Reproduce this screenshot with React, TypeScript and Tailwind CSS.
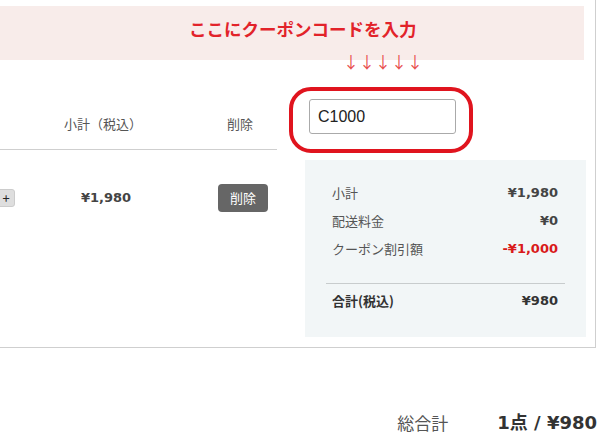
import React from 'react'

const SUMMARY = [
  { label: '小計', value: '¥1,980', red: false },
  { label: '配送料金', value: '¥0', red: false },
  { label: 'クーポン割引額', value: '-¥1,000', red: true },
]

const NUM = { fontFamily: '"DejaVu Sans", "Noto Sans CJK JP", sans-serif' }

export default function App() {
  return (
    <div
      className="w-[600px] h-[435px] bg-white overflow-hidden text-[#555]"
      style={{ fontFamily: '"Noto Sans CJK JP", "Noto Sans", sans-serif' }}
    >
      <div className="w-[596px] h-[348px] border-r border-b border-[#cfcfcf] flex flex-col">
        {/* banner */}
        <div className="mt-[6px] h-[54px] w-[584px] bg-[#f8ecea] flex items-start pl-[189px] pt-[9px]">
          <span className="text-[17.5px] leading-[28px] font-bold text-[#e2232a]">ここにクーポンコードを入力</span>
        </div>

        <div className="flex flex-1">
          {/* cart table */}
          <div className="w-[277px] flex flex-col">
            <div className="h-[90px] border-b border-[#cfcfcf] flex items-end pb-[15px] text-[13px] leading-[20px]">
              <span className="ml-[64px]">小計（税込）</span>
              <span className="ml-[85px]">削除</span>
            </div>
            <div className="flex items-center pt-[34px]">
              <button className="w-[18px] h-[18px] -ml-[3px] rounded-[3px] bg-[#dedede] border border-[#ccc] text-[13px] leading-[14px] text-[#222] flex items-center justify-center">
                +
              </button>
              <span className="ml-[66px] w-[60px] text-[13px] font-bold text-[#444]" style={NUM}>¥1,980</span>
              <button className="ml-[77px] w-[50px] h-[28px] rounded-[4px] bg-[#666] text-white text-[13px] leading-[28px]">
                削除
              </button>
            </div>
          </div>

          {/* coupon + summary */}
          <div className="relative flex-1 flex flex-col">
            <div className="absolute left-[66px] -top-[8px] flex text-[#e8504f] text-[16px] leading-[18px]">
              {[0, 1, 2, 3, 4].map(i => (
                <span key={i} className="w-[16px] text-center">↓</span>
              ))}
            </div>

            <div className="relative ml-[32px] mt-[39px] w-[147px]">
              <input
                readOnly
                value="C1000"
                className="w-[147px] h-[35px] border border-[#aaa] rounded-[3px] px-[8px] text-[16px] text-[#222] outline-none"
                style={{ fontFamily: '"Liberation Sans", Arial, sans-serif' }}
              />
              <div className="absolute -left-[20px] -top-[12px] w-[184px] h-[66px] border-[4px] border-[#e0141e] rounded-[22px]" />
            </div>

            <div className="ml-[28px] mt-[26px] w-[281px] h-[177px] bg-[#f2f6f7] px-[21px] pt-[19px]">
              {SUMMARY.map(r => (
                <div key={r.label} className="h-[28px] flex items-center justify-between pl-[6px] pr-[7px] text-[13px]">
                  <span>{r.label}</span>
                  <span className={r.red ? 'font-bold text-[#d91a1a]' : 'font-bold text-[#444]'} style={NUM}>{r.value}</span>
                </div>
              ))}
              <div className="mt-[20px] border-t border-[#c8cccd]" />
              <div className="h-[34px] flex items-center justify-between pl-[6px] pr-[7px] text-[13px] font-bold text-[#333]">
                <span>合計(税込)</span>
                <span style={NUM}>¥980</span>
              </div>
            </div>
          </div>
        </div>
      </div>

      {/* grand total */}
      <div className="flex items-center justify-end pr-[3px] mt-[61px]">
        <span className="text-[17px] text-[#555]">総合計</span>
        <span className="ml-[49px] text-[18px] font-bold text-[#333]" style={NUM}>1点 / ¥980</span>
      </div>
    </div>
  )
}
